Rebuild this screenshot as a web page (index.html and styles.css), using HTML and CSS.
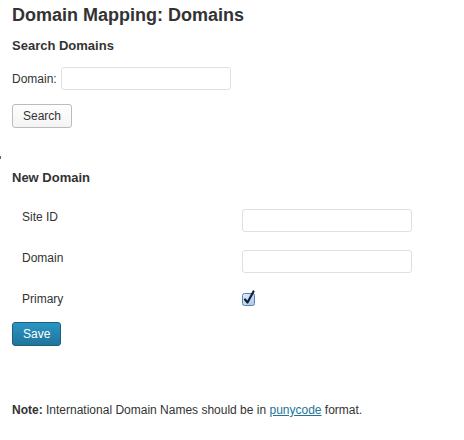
FILE: index.html
```html
<!DOCTYPE html>
<html lang="en">
<head>
    <meta charset="UTF-8">
    <title>Domain Mapping: Domains</title>
    <link rel="stylesheet" href="styles.css">
</head>
<body>
    <span class="stray"></span>
    <div class="wrap">
        <h2>Domain Mapping: Domains</h2>

        <h3>Search Domains</h3>
        <form class="search-form">
            <p class="search-row">
                <label for="search-domain">Domain:</label>
                <input type="text" id="search-domain" class="field short">
            </p>
            <button class="button" type="button">Search</button>
        </form>

        <h3 class="new-title">New Domain</h3>
        <form class="new-form">
            <table class="form-table">
                <tr>
                    <th>Site ID</th>
                    <td><input type="text" class="field"></td>
                </tr>
                <tr>
                    <th>Domain</th>
                    <td><input type="text" class="field"></td>
                </tr>
                <tr>
                    <th>Primary</th>
                    <td>
                        <span class="check">
                            <svg width="15" height="16" viewBox="0 0 15 16">
                                <defs>
                                    <linearGradient id="cb" x1="0" y1="0" x2="1" y2="1">
                                        <stop offset="0" stop-color="#e4eefb"/>
                                        <stop offset="1" stop-color="#a9c4ea"/>
                                    </linearGradient>
                                </defs>
                                <rect x="0.5" y="3.5" width="12" height="12" rx="2" fill="url(#cb)" stroke="#5b7fb5"/>
                                <path d="M3 9.5 L5.5 12.5 L11.5 1.5" fill="none" stroke="#10233f" stroke-width="2.2" stroke-linecap="round" stroke-linejoin="round"/>
                            </svg>
                        </span>
                    </td>
                </tr>
            </table>
            <button class="button primary" type="button">Save</button>
        </form>

        <p class="note"><strong>Note:</strong> International Domain Names should be in <a href="#">punycode</a> format.</p>
    </div>
</body>
</html>
```

FILE: styles.css
```css
body {
    margin: 0;
    padding: 0;
    font-family: "Liberation Sans", Arial, sans-serif;
    font-size: 12px;
    color: #333;
    background: #fff;
    position: relative;
}
.stray {
    position: absolute;
    left: 0;
    top: 156px;
    width: 1px;
    height: 3px;
    background: #666;
}
.wrap {
    padding: 0 12px;
}
h2 {
    font-size: 18px;
    font-weight: bold;
    margin: 0;
    padding: 4px 0 0;
    line-height: 22px;
}
h3 {
    font-size: 13px;
    font-weight: bold;
    margin: 11px 0 0;
    line-height: 18px;
}
.search-row {
    margin: 12px 0 0;
    display: flex;
    align-items: center;
    gap: 4px;
}
.field {
    width: 170px;
    height: 23px;
    border: 1px solid #dfdfdf;
    border-radius: 3px;
    box-sizing: border-box;
    background: #fff;
    font: inherit;
    padding: 2px 4px;
}
.button {
    font-family: inherit;
    font-size: 12px;
    line-height: 14px;
    padding: 4px 10px;
    border: 1px solid #bbb;
    border-radius: 3px;
    background: linear-gradient(#fefefe, #f4f4f4);
    color: #333;
    cursor: pointer;
}
.search-form .button {
    margin-top: 14px;
    height: 24px;
}
.new-title {
    margin-top: 41px;
}
.form-table {
    border-collapse: collapse;
    margin-top: 13px;
}
.form-table th {
    width: 200px;
    text-align: left;
    font-weight: normal;
    padding: 10px 10px 9px;
    line-height: 14px;
    vertical-align: top;
}
.form-table td {
    padding: 9px 10px;
    vertical-align: top;
}
.check {
    display: block;
    width: 15px;
    height: 16px;
    margin: -1px 0 2px;
}
.check svg {
    display: block;
}
.button.primary {
    margin-top: 5px;
    height: 24px;
    background: linear-gradient(#2a95c5, #21759b);
    border-color: #1b607f;
    color: #fff;
    padding: 4px 10px;
}
.note {
    margin: 57px 0 0;
}
.note a {
    color: #21759b;
}
```
